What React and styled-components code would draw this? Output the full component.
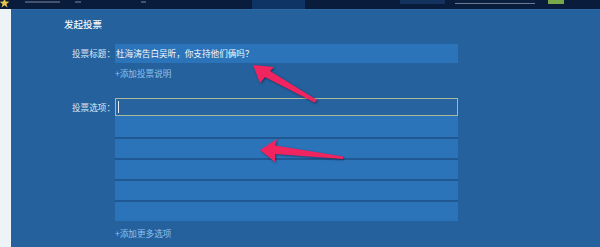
import React from "react";
import styled, { createGlobalStyle } from "styled-components";

const Global = createGlobalStyle`
  html, body { margin: 0; padding: 0; background: #24619d; }
  body { width: 600px; height: 247px; overflow: hidden; font-family: "Noto Sans CJK SC", "Noto Sans", sans-serif; }
`;

const Page = styled.div`
  position: relative;
  width: 600px;
  height: 247px;
  display: flex;
  flex-direction: column;
  overflow: hidden;
`;

const TopBar = styled.div`
  height: 9px;
  flex: none;
  background: #0a1c3b;
  display: flex;
  align-items: flex-start;
`;

const StarIcon = styled.svg`
  flex: none;
  margin-right: 16px;
`;

const Faint = styled.div`
  height: 2px;
  margin-top: 1px;
  width: ${(p) => p.$w}px;
  margin-right: ${(p) => p.$mr}px;
  background: #5a6a86;
  opacity: 0.7;
`;

const Tab = styled.div`
  width: 53px;
  height: 9px;
  background: #0e3466;
  margin-right: ${(p) => p.$mr}px;
`;

const DarkBox = styled.div`
  width: 45px;
  height: 4px;
  background: #13335e;
  margin-right: 10px;
`;

const Search = styled.div`
  width: 80px;
  height: 3px;
  background: #0b1f40;
  border-bottom: 1px solid #6c7a90;
  margin-right: 13px;
`;

const Green = styled.div`
  width: 16px;
  height: 4px;
  background: #79a84a;
`;

const Body = styled.div`
  flex: 1;
  display: flex;
`;

const Side = styled.div`
  width: 11px;
  flex: none;
  background: #eef3f8;
`;

const Main = styled.div`
  flex: 1;
  background: #24619d;
  border-top: 1px solid #2d6aa6;
  padding: 8px 0 0 53px;
  display: flex;
  flex-direction: column;
`;

const Title = styled.div`
  color: #f2f6fb;
  font-size: 9.5px;
  line-height: 12px;
  font-weight: 500;
  margin-bottom: 14px;
`;

const FormRow = styled.div`
  display: flex;
  align-items: flex-start;
  margin-top: ${(p) => p.$mt || 0}px;
`;

const Label = styled.div`
  width: 51px;
  flex: none;
  text-align: right;
  color: #dfe8f2;
  font-size: 8.6px;
  line-height: ${(p) => p.$lh}px;
  white-space: nowrap;
`;

const Field = styled.div`
  width: 343px;
  display: flex;
  flex-direction: column;
`;

const TextBox = styled.div`
  height: 19px;
  background: #2c74ba;
  color: #f4f8fc;
  font-size: 8.6px;
  line-height: 19px;
  padding-left: 1px;
  white-space: nowrap;
`;

const Link = styled.div`
  color: #8fc2f0;
  font-size: 8.6px;
  line-height: 12px;
  margin-top: ${(p) => p.$mt}px;
`;

const FocusBox = styled.div`
  height: 16px;
  background: #26639f;
  border: 1px solid #aab89c;
  box-sizing: content-box;
  width: 341px;
  position: relative;
  &::after {
    content: "";
    position: absolute;
    left: 2px;
    top: 2px;
    width: 1px;
    height: 12px;
    background: #e6ecf2;
  }
`;

const OptionRow = styled.div`
  height: ${(p) => (p.$first ? 21 : 19)}px;
  background: #2c74ba;
  border-top: ${(p) => (p.$first ? 0 : 2)}px solid #1f5893;
`;

const Arrows = styled.svg`
  position: absolute;
  left: 0;
  top: 0;
  pointer-events: none;
  filter: drop-shadow(1px 1px 1px rgba(20, 20, 50, 0.55));
`;

export default function App() {
  return (
    <Page>
      <Global />
      <TopBar>
        <StarIcon width="9" height="8" viewBox="0 0 10 9">
          <polygon fill="#e8c64a" points="5,-2 6.4,1.8 10.5,1.9 7.2,4.4 8.4,8.3 5,6 1.6,8.3 2.8,4.4 -0.5,1.9 3.6,1.8" />
        </StarIcon>
        <Faint $w={35} $mr={15} />
        <Faint $w={6} $mr={60} />
        <Faint $w={5} $mr={106} />
        <Tab $mr={95} />
        <DarkBox />
        <Search />
        <Green />
      </TopBar>
      <Body>
        <Side />
        <Main>
          <Title>发起投票</Title>
          <FormRow>
            <Label $lh={19}>投票标题：</Label>
            <Field>
              <TextBox>杜海涛告白吴昕，你支持他们俩吗？</TextBox>
              <Link $mt={4}>+添加投票说明</Link>
            </Field>
          </FormRow>
          <FormRow $mt={19}>
            <Label $lh={18}>投票选项：</Label>
            <Field>
              <FocusBox />
              <OptionRow $first />
              <OptionRow />
              <OptionRow />
              <OptionRow />
              <OptionRow />
              <Link $mt={6}>+添加更多选项</Link>
            </Field>
          </FormRow>
        </Main>
      </Body>
      <Arrows width="600" height="247" viewBox="0 0 600 247">
        <polygon
          fill="#f0245e"
          points="253,65 274,67 270,71 317,100 314.5,102.5 265,77 260,83"
        />
        <polygon
          fill="#f0245e"
          points="260,150 277,139 275,145.5 343,156.5 343,159 275,154 275,162"
        />
      </Arrows>
    </Page>
  );
}
